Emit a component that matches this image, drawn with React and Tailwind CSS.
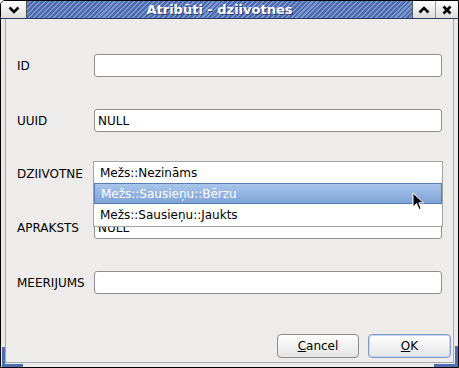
const font = { fontFamily: '"DejaVu Sans", Verdana, sans-serif' }

function Field({ label, value, className = '' }) {
  return (
    <div className={`flex items-center h-[23px] pl-[11px] pr-[11px] ${className}`}>
      <span className="w-[77px] text-[12px] text-black">{label}</span>
      <div className="flex-1 h-[23px] bg-white border border-[#8f8f8f] rounded-[3px] flex items-center px-[3px] text-[12px] text-black">
        {value}
      </div>
    </div>
  )
}

function Cursor() {
  return (
    <svg width="14" height="20" viewBox="0 0 14 20" className="absolute left-[411px] top-[191px]">
      <path d="M1 1 L1 15 L4.5 11.5 L7 17.5 L9.2 16.6 L6.8 10.8 L11.5 10.8 Z" fill="#000" stroke="#fff" strokeWidth="1" />
    </svg>
  )
}

export default function App() {
  return (
    <div style={font} className="w-[459px] h-[368px] bg-[#e9e9e9] border border-black rounded-tl-[5px] flex flex-col overflow-hidden relative">
      {/* barra titolo */}
      <div className="h-[18px] flex border-b border-[#2c3a5c] shrink-0">
        <div className="w-[26px] bg-gradient-to-b from-white to-[#dcdcdc] border-r border-[#555] flex items-center justify-center">
          <svg width="12" height="8" viewBox="0 0 12 8"><path d="M1.5 1.5 L6 6 L10.5 1.5" fill="none" stroke="#000" strokeWidth="2.6" /></svg>
        </div>
        <div className="flex-1 flex items-center justify-center bg-[repeating-linear-gradient(135deg,#4c6aad_0px,#4c6aad_2px,#7d98cf_2px,#7d98cf_3.5px)]">
          <span className="text-white font-bold text-[13px] leading-none" style={{ textShadow: '1px 1px 0 #2b3f6e' }}>Atribūti - dziivotnes</span>
        </div>
        <div className="w-[23px] bg-gradient-to-b from-white to-[#dcdcdc] border-l border-[#555] flex items-center justify-center">
          <svg width="12" height="8" viewBox="0 0 12 8"><path d="M1.5 6.5 L6 2 L10.5 6.5" fill="none" stroke="#000" strokeWidth="2.6" /></svg>
        </div>
        <div className="w-[23px] bg-gradient-to-b from-white to-[#dcdcdc] border-l border-[#999] flex items-center justify-center">
          <svg width="10" height="10" viewBox="0 0 10 10"><path d="M1.5 1.5 L8.5 8.5 M8.5 1.5 L1.5 8.5" stroke="#000" strokeWidth="2.6" /></svg>
        </div>
      </div>

      {/* cornice */}
      <div className="flex-1 px-[4px] pb-[4px] relative">
        <div className="h-full border-x border-b border-[#a8a8a8] bg-[#edecea] flex flex-col">
          <Field label="ID" value="" className="mt-[35px]" />
          <Field label="UUID" value="NULL" className="mt-[32px]" />
          <Field label="DZIIVOTNE" value="" className="mt-[30px]" />
          <Field label="APRAKSTS" value="NULL" className="mt-[31px]" />
          <Field label="MEERIJUMS" value="" className="mt-[32px]" />
          <div className="flex-1" />
          <div className="flex justify-end gap-[9px] pr-[2px] mb-[4px]">
            <button className="w-[82px] h-[24px] rounded-[4px] border border-[#8c8c8c] bg-gradient-to-b from-white to-[#e4e4e4] text-[12px] text-black">
              <span className="underline">C</span>ancel
            </button>
            <button className="w-[83px] h-[24px] rounded-[4px] border border-[#7f9cc9] bg-gradient-to-b from-white to-[#e4e4e4] text-[12px] text-black shadow-[inset_0_0_0_1px_#c5d5ec]">
              <span className="underline">O</span>K
            </button>
          </div>
        </div>
        {/* angoli blu */}
        <div className="absolute left-[1px] bottom-[0px] w-[3px] h-[20px] bg-[#4d6cb2]" />
        <div className="absolute left-[1px] bottom-[0px] w-[21px] h-[3px] bg-[#4d6cb2]" />
        <div className="absolute right-[0px] bottom-[0px] w-[3px] h-[21px] bg-[#4d6cb2]" />
        <div className="absolute right-[0px] bottom-[0px] w-[24px] h-[3px] bg-[#4d6cb2]" />
      </div>

      {/* lista a discesa */}
      <div className="absolute left-[92px] top-[160px] w-[350px] h-[66px] bg-white border border-[#a3a3a3] text-[12px] flex flex-col">
        <div className="h-[21px] flex items-center px-[6px] text-black">Mežs::Nezināms</div>
        <div className="h-[21px] flex items-center px-[6px] text-white border border-[#5a7db5] bg-gradient-to-b from-[#a9c5eb] to-[#7fa3d6]">Mežs::Sausieņu::Bērzu</div>
        <div className="h-[21px] flex items-center px-[6px] text-black">Mežs::Sausieņu::Jaukts</div>
      </div>
      <Cursor />
    </div>
  )
}
